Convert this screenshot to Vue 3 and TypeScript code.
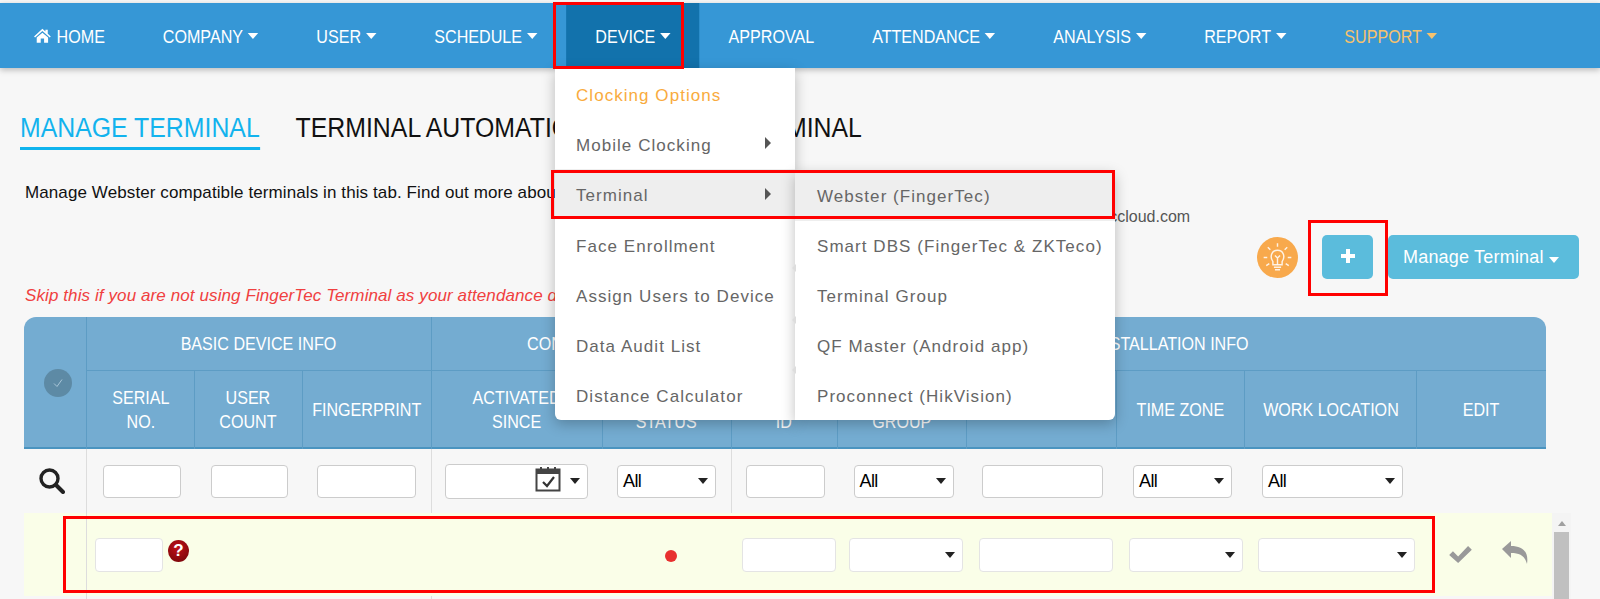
<script setup lang="ts">
import { computed } from 'vue'

type Control = { kind: 'input' | 'select' | 'date'; left: number; width: number; text?: string }

const navItems = [
  { label: 'COMPANY', caret: true },
  { label: 'USER', caret: true },
  { label: 'SCHEDULE', caret: true },
  { label: 'DEVICE', caret: true, active: true },
  { label: 'APPROVAL', caret: false },
  { label: 'ATTENDANCE', caret: true },
  { label: 'ANALYSIS', caret: true },
  { label: 'REPORT', caret: true },
  { label: 'SUPPORT', caret: true, support: true },
]

const menuLeft = [
  { label: 'Clocking Options', accent: true },
  { label: 'Mobile Clocking', arrow: true },
  { label: 'Terminal', arrow: true, hover: true },
  { label: 'Face Enrollment' },
  { label: 'Assign Users to Device' },
  { label: 'Data Audit List' },
  { label: 'Distance Calculator' },
]

const menuRight = [
  { label: 'Webster (FingerTec)', hover: true },
  { label: 'Smart DBS (FingerTec & ZKTeco)' },
  { label: 'Terminal Group' },
  { label: 'QF Master (Android app)' },
  { label: 'Proconnect (HikVision)' },
]

const notches = [268, 320, 370]

const widths = [63, 108, 107.5, 129, 171, 129, 106.5, 129, 150, 128, 172, 129]
const gridColumns = computed(() => widths.map((w) => w + 'px').join(' '))

const subHeads = [
  'SERIAL\nNO.',
  'USER\nCOUNT',
  'FINGERPRINT',
  'ACTIVATED\nSINCE',
  'CONNECTION\nSTATUS',
  'TERMINAL\nID',
  'TERMINAL\nGROUP',
  'TERMINAL NAME',
  'TIME ZONE',
  'WORK LOCATION',
  'EDIT',
]

const filters: Control[] = [
  { kind: 'input', left: 16, width: 78 },
  { kind: 'input', left: 16, width: 77 },
  { kind: 'input', left: 14.5, width: 99 },
  { kind: 'date', left: 13, width: 143 },
  { kind: 'select', left: 14.5, width: 99, text: 'All' },
  { kind: 'input', left: 14, width: 79 },
  { kind: 'select', left: 15.5, width: 100, text: 'All' },
  { kind: 'input', left: 15, width: 121 },
  { kind: 'select', left: 16, width: 99, text: 'All' },
  { kind: 'select', left: 17, width: 141, text: 'All' },
]

const editControls: Control[] = [
  { kind: 'input', left: 10, width: 94 },
  { kind: 'select', left: 11, width: 114 },
  { kind: 'input', left: 11.5, width: 134.5 },
  { kind: 'select', left: 12, width: 114 },
  { kind: 'select', left: 13, width: 157 },
]
</script>

<template>
  <div class="page">
    <nav class="navbar">
      <div class="nav-links">
        <a class="nav-item">
          <svg class="home-icon" viewBox="0 0 26 22" preserveAspectRatio="none"><path d="M13 1 L17.5 5.2 V2.5 H21 V8.5 L25.5 12.5 L24 14 L13 4.5 L2 14 L.5 12.5 Z M4.5 14 L13 6.8 L21.5 14 V21.5 H15.5 V15.5 H10.5 V21.5 H4.5 Z" fill="#fff" /></svg>
          HOME
        </a>
        <a
          v-for="item in navItems"
          :key="item.label"
          class="nav-item"
          :class="{ active: item.active, support: item.support }"
        >
          {{ item.label }}<i v-if="item.caret" class="caret"></i>
        </a>
      </div>
      <div class="nav-right">
        <svg class="cart" viewBox="0 0 24 21"><path d="M0 0 H4.5 L5.4 3 H24 L21.8 12 H8 L8.5 14 H21.5 V16 H6.6 L3.2 2 H0 Z" fill="#fff" /><circle cx="8.5" cy="18.8" r="2.2" fill="#fff" /><circle cx="19" cy="18.8" r="2.2" fill="#fff" /></svg>
        <div class="apps"><span v-for="n in 9" :key="n"></span></div>
      </div>
    </nav>

    <div class="tabs">
      <span class="tab current">MANAGE TERMINAL</span>
      <span class="tab">TERMINAL AUTOMATION</span>
      <span class="tab">OFFLINE TERMINAL</span>
    </div>

    <p class="intro">Manage Webster compatible terminals in this tab. Find out more about compatible terminals here</p>
    <p class="intro-link">support@timeteccloud.com</p>

    <div class="actions">
      <span class="bulb">
        <svg viewBox="0 0 40 40"><g fill="none" stroke="#fff" stroke-opacity=".85" stroke-width="1.4"><path d="M15.5 24 C12 19 14.5 13 20 13 C25.5 13 28 19 24.5 24 V27 H15.5 Z" /><path d="M16.5 29.5 H23.5 M17.5 32 H22.5 M20 27 V20 M17.5 18 L20 20.5 L22.5 18" /><path d="M20 6 V9.5 M10.5 10 L13 12.5 M29.5 10 L27 12.5 M6.5 20 H10 M33.5 20 H30 M9 28 L12 26 M31 28 L28 26" /></g></svg>
      </span>
      <button class="btn plus"><svg viewBox="0 0 16 16"><path d="M6 1 H10 V6 H15 V10 H10 V15 H6 V10 H1 V6 H6 Z" fill="#fff" /></svg></button>
      <button class="btn manage">Manage Terminal<i class="caret"></i></button>
    </div>

    <p class="warning">Skip this if you are not using FingerTec Terminal as your attendance device.</p>

    <div class="grid-wrap">
      <div class="head" :style="{ gridTemplateColumns: gridColumns }">
        <div class="h-cell check-cell"><span class="check-all"><svg viewBox="0 0 12 12"><path d="M2 6.5 L5 9.5 L10 2.5" fill="none" stroke="#a9c6d8" stroke-width="1" /></svg></span></div>
        <div class="h-cell group basic"><span class="squeeze">BASIC DEVICE INFO</span></div>
        <div class="h-cell group conn"><span class="squeeze">CONNECTION</span></div>
        <div class="h-cell group install"><span class="squeeze">INSTALLATION INFO</span></div>
        <div v-for="h in subHeads" :key="h" class="h-cell sub"><span class="squeeze">{{ h }}</span></div>
      </div>

      <div class="filter-row" :style="{ gridTemplateColumns: gridColumns }">
        <div class="f-cell search-cell">
          <svg viewBox="0 0 26 26"><circle cx="10.5" cy="10.5" r="8.5" fill="none" stroke="#222" stroke-width="3.4" /><path d="M17 17 L24 24" stroke="#222" stroke-width="4" stroke-linecap="round" /></svg>
        </div>
        <div v-for="(c, i) in filters" :key="i" class="f-cell" :class="{ sep: i === 2 || i === 4 }">
          <div class="control" :class="c.kind" :style="{ marginLeft: c.left + 'px', width: c.width + 'px' }">
            <span v-if="c.text" class="control-text">{{ c.text }}</span>
            <svg v-if="c.kind === 'date'" class="cal" viewBox="0 0 26 26"><rect x="1.5" y="3.5" width="23" height="21" fill="#fff" stroke="#444" stroke-width="2" /><rect x="1" y="3" width="24" height="5" fill="#444" /><path d="M6 1 V4 M13 1 V4 M20 1 V4" stroke="#444" stroke-width="2" /><path d="M8 16 L12 20 L19 11" fill="none" stroke="#333" stroke-width="2.2" /></svg>
            <i v-if="c.kind !== 'input'" class="sel-arrow"></i>
          </div>
        </div>
      </div>

      <div class="edit-row" :style="{ gridTemplateColumns: gridColumns }">
        <div class="e-cell first"></div>
        <div class="e-cell">
          <div class="control tall serial-input"></div>
          <span class="help">?</span>
        </div>
        <div class="e-cell"></div>
        <div class="e-cell"></div>
        <div class="e-cell"></div>
        <div class="e-cell dot-cell"><i class="dot"></i></div>
        <div v-for="(c, i) in editControls" :key="i" class="e-cell">
          <div class="control tall" :style="{ marginLeft: c.left + 'px', width: c.width + 'px' }">
            <i v-if="c.kind === 'select'" class="sel-arrow"></i>
          </div>
        </div>
        <div class="e-cell tools">
          <svg class="tool-check" viewBox="0 0 24 18"><path d="M0 9.5 L4 5.5 L9.5 11 L20 0 L24 4 L9.5 18 Z" fill="#999" /></svg>
          <svg class="tool-reply" viewBox="0 0 26 23"><path d="M0 8 L9 0 V5 C20 5 27 10 25 23 C23 15 18 12 9 12 V17 Z" fill="#999" /></svg>
        </div>
      </div>
      <div class="next-row" :style="{ gridTemplateColumns: gridColumns }">
        <i></i><i class="wide"></i>
      </div>
      <div class="scrollbar"><i class="up"></i><span class="thumb"></span></div>
    </div>

    <div class="dropdown">
      <a
        v-for="m in menuLeft"
        :key="m.label"
        class="menu-row"
        :class="{ accent: m.accent, hover: m.hover }"
      >{{ m.label }}<i v-if="m.arrow" class="menu-arrow"></i></a>
    </div>
    <div class="submenu">
      <a v-for="m in menuRight" :key="m.label" class="menu-row sub-row" :class="{ hover: m.hover }">{{ m.label }}</a>
    </div>
    <i v-for="y in notches" :key="y" class="notch" :style="{ top: y + 'px' }"></i>

    <!-- red annotation boxes drawn over the screenshot -->
    <i class="mark mark-device"></i>
    <i class="mark mark-terminal"></i>
    <i class="mark mark-plus"></i>
    <i class="mark mark-row"></i>
  </div>
</template>

<style>
html, body { margin: 0; background: #f7f7f7; }
</style>

<style scoped>
.page {
  position: relative;
  width: 1600px;
  height: 599px;
  overflow: hidden;
  background: #f7f7f7;
  font-family: "Liberation Sans", Arial, sans-serif;
  color: #111;
}

.navbar {
  display: flex;
  align-items: stretch;
  justify-content: space-between;
  height: 65px;
  margin-top: 3px;
  padding-left: 5px;
  background: #3697d6;
  box-shadow: 0 2px 6px rgba(0, 0, 0, 0.25);
  font-size: 18.5px;
  color: #fff;
}
/* the original uses a narrow face, so the whole link row is squeezed */
.nav-links {
  display: flex;
  flex: 0 0 1400px;
  transform: scaleX(0.87);
  transform-origin: left;
}
.nav-item {
  display: flex;
  align-items: center;
  padding: 2px 33.3px 0;
  white-space: nowrap;
}
.nav-item.active { background: #1272ac; }
.nav-item.support { color: #f6c26d; }
.home-icon { width: 20px; height: 15px; margin: -2px 6px 0 0; }
.caret {
  display: inline-block;
  margin-left: 5px;
  border-left: 5.5px solid transparent;
  border-right: 5.5px solid transparent;
  border-top: 6px solid currentColor;
}
.nav-item .caret {
  margin-left: 5.7px;
  border-left-width: 6.4px;
  border-right-width: 6.4px;
  margin-top: -1px;
}
.nav-right { display: flex; align-items: center; padding-right: 10px; gap: 49px; }
.cart { width: 25px; height: 21px; margin-top: 4px; }
.apps { display: grid; grid-template-columns: repeat(3, 7.4px); grid-auto-rows: 6px; gap: 1.4px; }
.apps span { background: #fff; }

.tabs {
  display: flex;
  gap: 39px;
  margin: 39px 0 0 20px;
  font-size: 27px;
  line-height: 36px;
  transform: scaleX(0.92);
  transform-origin: left;
}
.tab { padding: 3px 0 1px; white-space: nowrap; }
.tab.current { color: #12b3ee; border-bottom: 3px solid #0fb4ee; }

.intro { margin: 32px 0 0 25px; font-size: 17px; line-height: 22px; letter-spacing: 0.1px; white-space: nowrap; }
.intro-link { margin: 3px 0 0 0; padding-left: 996px; font-size: 16px; line-height: 20px; color: #555; }

.actions { display: flex; align-items: center; justify-content: flex-end; height: 44px; margin: 8px 21px 0 0; }
.bulb { width: 41px; height: 41px; margin-right: 24px; border-radius: 50%; background: #f8a94c; }
.bulb svg { display: block; }
.btn {
  height: 44px;
  padding: 0;
  border: 0;
  border-radius: 5px;
  background: #5bbcdc;
  color: #fff;
  font: inherit;
  font-size: 18px;
}
.plus { display: flex; align-items: center; justify-content: center; width: 51px; margin-right: 15px; padding-bottom: 3px; }
.plus svg { width: 16px; height: 16px; }
.manage { width: 191px; padding-left: 15px; text-align: left; letter-spacing: 0.2px; white-space: nowrap; }

.warning { margin: 6px 0 0 25px; font-size: 17px; line-height: 22px; letter-spacing: 0.1px; font-style: italic; color: #f04040; white-space: nowrap; }

.grid-wrap { position: relative; margin: 10px 0 0 24px; }
.head {
  display: grid;
  grid-template-rows: 54px 78px;
  box-sizing: border-box;
  width: 1522px;
  height: 132px;
  background: #74acd1;
  border-radius: 12px 12px 0 0;
  border-bottom: 2px solid #4a94c0;
  color: #fff;
  font-size: 18.5px;
  text-align: center;
}
.h-cell {
  display: flex;
  align-items: center;
  justify-content: center;
  box-sizing: border-box;
  min-width: 0;
  line-height: 24px;
  border-right: 1px solid #5d9cc4;
}
.squeeze { display: block; flex: none; transform: scaleX(0.87); white-space: pre; }
.check-cell { grid-row: 1 / 3; grid-column: 1; padding-left: 5px; }
.check-all { display: flex; align-items: center; justify-content: center; width: 28px; height: 28px; border-radius: 50%; background: #5d8aa5; }
.check-all svg { width: 12px; height: 12px; }
.group { border-bottom: 1px solid #5d9cc4; }
.basic { grid-column: 2 / 5; }
.conn { grid-column: 5 / 7; }
.install { grid-column: 7 / 13; border-right: 0; padding-left: 65px; }
.sub:last-child { border-right: 0; }

.filter-row { display: grid; width: 1522px; height: 64px; }
.f-cell { display: flex; align-items: center; min-width: 0; }
.search-cell { justify-content: center; padding-right: 7px; box-sizing: border-box; border-right: 1px solid #ddd; }
.search-cell svg { width: 26px; height: 26px; }
.f-cell.sep { box-sizing: border-box; border-right: 1px solid #ddd; }

.control {
  position: relative;
  display: flex;
  align-items: center;
  flex: none;
  box-sizing: border-box;
  height: 33px;
  padding-left: 5px;
  background: #fff;
  border: 1px solid #ccc;
  border-radius: 4px;
  font-size: 18px;
}
.control.tall { height: 34px; border: 1.5px solid #e4e4e4; }
.control.date { height: 35px; }
.control-text { letter-spacing: -0.6px; color: #000; }
.cal { position: absolute; right: 26px; top: 1px; width: 26px; height: 26px; }
.sel-arrow {
  position: absolute;
  right: 7px;
  top: 50%;
  margin-top: -3px;
  border-left: 5px solid transparent;
  border-right: 5px solid transparent;
  border-top: 6px solid #222;
}

.edit-row { display: grid; width: 1528px; height: 83px; background: #fafee8; }
.e-cell { display: flex; align-items: center; min-width: 0; }
.e-cell.first { box-sizing: border-box; border-right: 1px solid #ddd; }
.serial-input { width: 68px; margin-left: 8px; }
.help {
  display: flex;
  align-items: center;
  justify-content: center;
  flex: none;
  width: 21px;
  height: 22px;
  margin: -8px 0 0 5px;
  border-radius: 50%;
  background: radial-gradient(circle at 45% 35%, #c01018, #6e0508);
  color: #fff;
  font: bold 17px "Liberation Sans", sans-serif;
}
.dot-cell { box-sizing: border-box; padding: 3px 0 0 62px; }
.dot { width: 12px; height: 12px; border-radius: 50%; background: #e8302f; }
.tools { box-sizing: border-box; gap: 30px; padding-left: 32px; }
.tool-check { flex: none; width: 23px; height: 17px; margin-top: -1px; }
.tool-reply { flex: none; width: 26px; height: 23px; margin-top: -4px; }

.next-row { display: grid; height: 3px; }
.next-row i { box-sizing: border-box; border-right: 1px solid #ddd; }
.next-row .wide { grid-column: 2 / 5; }

.scrollbar { position: absolute; left: 1528px; top: 196px; width: 19px; height: 86px; background: #f4f4f4; }
.up { position: absolute; left: 6px; top: 8px; border-left: 4px solid transparent; border-right: 4px solid transparent; border-bottom: 5px solid #a0a0a0; }
.thumb { position: absolute; left: 2px; right: 2px; top: 19px; bottom: 0; background: #c0c0c0; }

.dropdown {
  position: absolute;
  left: 555px;
  top: 68px;
  width: 240px;
  height: 352px;
  background: #fff;
  border-radius: 0 0 0 6px;
  box-shadow: 0 4px 14px rgba(0, 0, 0, 0.25);
}
.submenu {
  position: absolute;
  left: 795px;
  top: 171px;
  width: 320px;
  height: 249px;
  background: #fff;
  border-radius: 0 4px 6px 0;
  box-shadow: 0 4px 14px rgba(0, 0, 0, 0.25);
}
.menu-row {
  position: relative;
  display: flex;
  align-items: center;
  box-sizing: border-box;
  height: 50.3px;
  padding: 5px 0 0 21px;
  font-size: 17px;
  letter-spacing: 1.05px;
  color: #666;
  white-space: nowrap;
}
.menu-row.accent { color: #f9ab3d; }
.menu-row.hover { background: #eee; }
.sub-row { height: 50px; padding: 2px 0 0 22px; }
.menu-arrow {
  position: absolute;
  right: 24px;
  top: 50%;
  margin-top: -6px;
  border-top: 6px solid transparent;
  border-bottom: 6px solid transparent;
  border-left: 6px solid #555;
}
.notch {
  position: absolute;
  left: 792px;
  margin-top: -4px;
  border-top: 4px solid transparent;
  border-bottom: 4px solid transparent;
  border-right: 4px solid #ddd;
}

.mark { position: absolute; box-sizing: border-box; border: 3px solid #f00; pointer-events: none; }
.mark-device { left: 553px; top: 2px; width: 131px; height: 67px; }
.mark-terminal { left: 551px; top: 170px; width: 564px; height: 49px; }
.mark-plus { left: 1308px; top: 220px; width: 80px; height: 76px; }
.mark-row { left: 63px; top: 516px; width: 1372px; height: 77px; }
</style>
